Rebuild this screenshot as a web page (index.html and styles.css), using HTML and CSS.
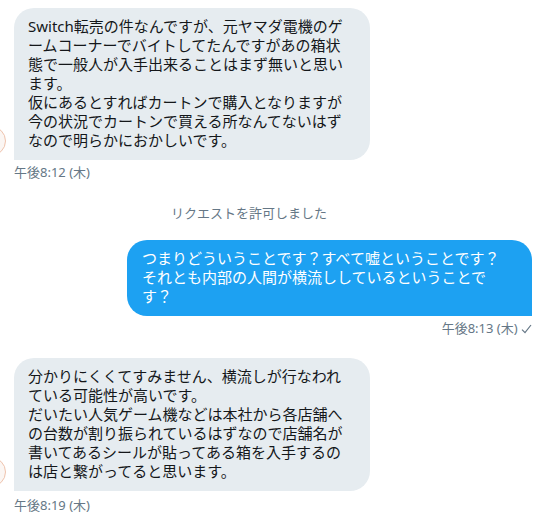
FILE: index.html
```html
<!DOCTYPE html>
<html lang="ja">

<head>
  <meta charset="UTF-8">
  <title>メッセージ</title>
  <link rel="stylesheet" href="styles.css">
</head>

<body>
  <div class="chat">
    <div class="msg msg-in">
      <div class="msg-row">
        <div class="avatar"></div>
        <div class="bubble">Switch転売の件なんですが、元ヤマダ電機のゲームコーナーでバイトしてたんですがあの箱状態で一般人が入手出来ることはまず無いと思います。<br>仮にあるとすればカートンで購入となりますが今の状況でカートンで買える所なんてないはずなので明らかにおかしいです。</div>
      </div>
      <div class="time">午後8:12 (木)</div>
    </div>

    <div class="notice">リクエストを許可しました</div>

    <div class="msg msg-out">
      <div class="msg-row">
        <div class="bubble">つまりどういうことです？すべて嘘ということです？<br>それとも内部の人間が横流ししているということです？</div>
      </div>
      <div class="time">午後8:13 (木)
        <svg class="check" width="11" height="10" viewBox="0 0 11 10"><path d="M1 5.6 L4 8.6 L10 1" fill="none" stroke="#657786" stroke-width="1.2"/></svg>
      </div>
    </div>

    <div class="msg msg-in msg-last">
      <div class="msg-row">
        <div class="avatar"></div>
        <div class="bubble">分かりにくくてすみません、横流しが行なわれている可能性が高いです。<br>だいたい人気ゲーム機などは本社から各店舗への台数が割り振られているはずなので店舗名が書いてあるシールが貼ってある箱を入手するのは店と繋がってると思います。</div>
      </div>
      <div class="time">午後8:19 (木)</div>
    </div>
  </div>
</body>

</html>
```

FILE: styles.css
```css
body {
  margin: 0;
  padding: 0;
  background-color: #fff;
  font-family: "Noto Sans", "Noto Sans CJK JP", sans-serif;
  color: #14171a;
}

.chat {
  padding: 8px 11px 0 14px;
  overflow: hidden;
}

.msg-row {
  display: flex;
  align-items: flex-end;
}

.msg-out .msg-row {
  justify-content: flex-end;
}

.avatar {
  flex: none;
  width: 30px;
  height: 30px;
  margin: 0 8px 4px -38px;
  border-radius: 50%;
  border: 1px solid #efc3ad;
  background-color: #fbf6f3;
  box-sizing: border-box;
}

.bubble {
  font-size: 15px;
  line-height: 19px;
  padding: 9px 14px 10px;
  box-sizing: border-box;
  border-radius: 20px;
}

.msg-in .bubble {
  width: 356px;
  padding-right: 22px;
  background-color: #e6ecf0;
  border-bottom-left-radius: 0;
}

.msg-out .bubble {
  width: 405px;
  padding: 9px 20px 10px 15px;
  background-color: #1da1f2;
  color: #fff;
  border-bottom-right-radius: 0;
}

.time {
  margin-top: 4px;
  font-size: 13px;
  line-height: 16px;
  color: #657786;
}

.msg-out .time {
  text-align: right;
}

.check {
  vertical-align: -1px;
}

.msg-last .time {
  margin-top: 6px;
}

.notice {
  margin-top: 25px;
  padding-right: 48px;
  text-align: center;
  font-size: 13px;
  line-height: 16px;
  color: #657786;
}

.msg-out {
  margin-top: 19px;
}

.msg-last {
  margin-top: 22px;
}
```
